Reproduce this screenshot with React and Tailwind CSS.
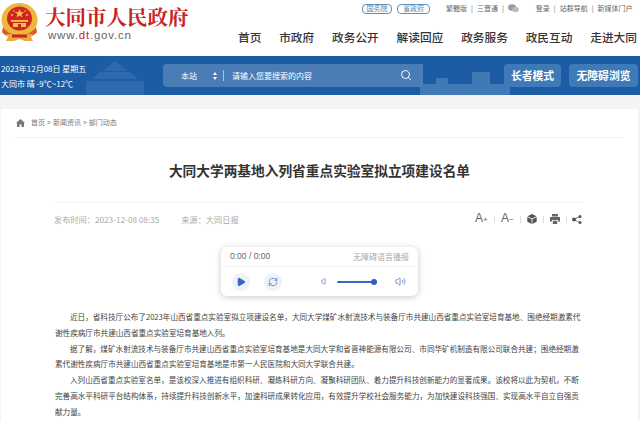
import React from "react";
import { Search, Play, RefreshCw, Volume, Volume2 } from "lucide-react";

const font = { fontFamily: '"Noto Sans CJK SC","Liberation Sans",sans-serif' };
const latin = { fontFamily: '"Liberation Sans",sans-serif' };

function Emblem() {
  return (
    <svg width="37" height="39" viewBox="0 0 37 39" className="shrink-0">
      <ellipse cx="18.500" cy="17" rx="18" ry="17" fill="#efb63c" />
      <ellipse cx="18.500" cy="15.500" rx="12.500" ry="12" fill="#cf2620" />
      <path d="M18.500 6l1.300 3.300h3.400l-2.800 2 1.100 3.300-3-2-3 2 1.100-3.300-2.800-2h3.400z" fill="#f5c842" />
      <circle cx="11" cy="12" r="1" fill="#f5c842" /><circle cx="26" cy="12" r="1" fill="#f5c842" />
      <circle cx="13" cy="8" r="0.800" fill="#f5c842" /><circle cx="24" cy="8" r="0.800" fill="#f5c842" />
      <rect x="10" y="17" width="17" height="1.800" fill="#f5c842" />
      <rect x="12" y="20" width="13" height="4" fill="#f5c842" />
      <rect x="17" y="21" width="3" height="3" fill="#cf2620" />
      <path d="M2 24c3 5 9 8 16.500 8S32 29 35 24l1 5c-3 4-9 6-17.500 6S4 33 1 29z" fill="#e2552a" />
      <path d="M5 31h27l-2 3 2 4H24l-5.500-2L13 38H5l2-4z" fill="#e9a93a" />
      <rect x="11" y="31.500" width="15" height="3" fill="#c9261f" />
    </svg>
  );
}

function Header() {
  const items = ["首页", "市政府", "政务公开", "解读回应", "政务服务", "政民互动", "走进大同"];
  return (
    <div className="flex h-[56px] bg-white">
      <div className="flex w-[232px] shrink-0 pl-[1px] pt-[3px]">
        <Emblem />
        <div className="ml-[7px] flex flex-col">
          <div className="text-[20.500px] leading-[26px] font-bold text-[#c7231f] whitespace-nowrap" style={{ fontFamily: '"Noto Serif CJK SC","Noto Sans CJK SC",serif' }}>大同市人民政府</div>
          <div className="ml-[3px] text-[11.500px] leading-[13px] tracking-[0.800px] text-[#666]" style={latin}>www.<span className="text-[#c7231f]">dt</span>.gov.cn</div>
        </div>
      </div>
      <div className="flex flex-1 flex-col">
        <div className="flex h-[17px] items-center text-[7px] text-[#666] whitespace-nowrap">
          <div className="ml-[130px] flex gap-[5px]">
            <span className="flex h-[10px] w-[30px] items-center justify-center rounded-[4px] border border-[#5b93b7] text-[#4d87ad]">国务院</span>
            <span className="flex h-[10px] w-[33px] items-center justify-center rounded-[4px] border border-[#5b93b7] text-[#4d87ad]">省政府</span>
          </div>
          <div className="ml-[16px] flex items-center gap-[4px]">
            <span>繁體版</span><span>|</span><span>三晋通</span><span>|</span>
            <svg width="11" height="9" viewBox="0 0 11 9"><ellipse cx="4" cy="3.500" rx="4" ry="3.300" fill="#999" /><ellipse cx="7.500" cy="5.500" rx="3.300" ry="2.800" fill="#bbb" /></svg>
          </div>
          <div className="ml-[17px] flex items-center gap-[4px]">
            <span>登录</span><span>|</span><span>站群导航</span><span>|</span><span>新媒体门户</span>
          </div>
        </div>
        <nav className="flex justify-between pl-[6px] pr-[3px] pt-[11px] text-[11.700px] leading-[18px] font-medium text-[#333] whitespace-nowrap">
          {items.map((t) => <span key={t}>{t}</span>)}
        </nav>
      </div>
    </div>
  );
}

function SearchBand() {
  return (
    <div className="relative flex h-[39px] items-center overflow-hidden bg-[#1b5ca4] text-white">
      <svg className="absolute left-[70px] top-[3px]" width="90" height="36" viewBox="0 0 90 36" fill="#3a76b6" opacity="0.55">
        <path d="M45 2l12 10H33zM30 13h30l8 7H22zM16 22h58v14H16z" />
      </svg>
      <svg className="absolute left-[420px] top-[10px]" width="90" height="29" viewBox="0 0 90 29" fill="#6c9ccc" opacity="0.45">
        <path d="M0 18h90v11H0zM52 6h18v12H52zM16 12h12v6H16z" />
      </svg>
      <div className="relative w-[163px] shrink-0 pl-[1px] text-[8px] leading-[15px] whitespace-nowrap">
        <div>2023年12月08日 星期五</div>
        <div>大同市 晴 -9℃~12℃</div>
      </div>
      <div className="relative flex h-[23px] w-[260px] shrink-0 items-center rounded-l-[4px] bg-[#4a7db6] pl-[18px] text-[8px] whitespace-nowrap">
        <span className="w-[32px]">本站</span>
        <svg width="4" height="8" viewBox="0 0 4 8" className="mr-[6px]" fill="#fff"><path d="M2 0l2 3H0zM2 8L0 5h4z" /></svg>
        <span className="mr-[8px] h-[11px] w-px bg-[#a9c4e0]" />
        <span>请输入您要搜索的内容</span>
        <Search className="absolute right-[11px] top-[5px] text-white" size={12} strokeWidth={2} />
      </div>
      <div className="relative ml-[81px] flex h-[23px] w-[57px] shrink-0 items-center justify-center rounded-[4px] bg-[#3f7ab8] text-[10.800px] font-bold whitespace-nowrap">长者模式</div>
      <div className="relative ml-[8px] flex h-[23px] w-[69px] shrink-0 items-center justify-center rounded-[4px] bg-[#3f7ab8] text-[10.800px] font-bold whitespace-nowrap">无障碍浏览</div>
    </div>
  );
}

function Crumb() {
  return (
    <div className="ml-[14px] mr-[14px] flex h-[29px] items-center border-b border-[#f1f1f1] pb-[1px] text-[7px] text-[#777] whitespace-nowrap">
      <svg width="9" height="8" viewBox="0 0 9 8" className="mr-[6px] ml-[1px]" fill="#777"><path d="M4.500 0L9 4H8v4H5.500V5.500h-2V8H1V4H0z" /></svg>
      <span>首页</span><span className="mx-[2px]">&gt;</span><span>新闻资讯</span><span className="mx-[2px]">&gt;</span><span>部门动态</span>
    </div>
  );
}

function Meta() {
  const Sep = ({ className }) => <span className={`block h-[7px] w-px bg-[#ddd] ${className}`} />;
  return (
    <div className="ml-[52px] mr-[56px] flex h-[33px] items-center justify-between border-t border-[#f3f3f3] text-[8.200px] text-[#aaa]">
      <div className="flex gap-[22px] pl-[1px] whitespace-nowrap"><span>发布时间：2023-12-08 08:35</span><span>来源：大同日报</span></div>
      <div className="flex items-center text-[#666]">
        <span className="w-[14px] text-[12px] leading-[12px] whitespace-nowrap" style={latin}>A<span className="text-[8px]">+</span></span>
        <Sep className="ml-[5px] mr-[6px]" />
        <span className="w-[14px] text-[12px] leading-[12px] whitespace-nowrap" style={latin}>A<span className="text-[8px]">−</span></span>
        <Sep className="ml-[5px] mr-[6px]" />
        <svg width="10" height="10" viewBox="0 0 10 10" fill="#555"><path d="M5 0l4.500 2.300L5 4.600.5 2.300zM.3 3l4.300 2.200V10L.3 7.700zM9.700 3L5.400 5.200V10l4.300-2.300z" /></svg>
        <Sep className="ml-[6px] mr-[6px]" />
        <svg width="10" height="10" viewBox="0 0 10 10" fill="#666"><path d="M2 0h6v2.500H2zM0 3h10v4.500H8V6H2v1.500H0zM2.800 6.800h4.400V10H2.800z" /></svg>
        <Sep className="ml-[6px] mr-[5px]" />
        <svg width="10" height="9" viewBox="0 0 10 9" fill="#555"><circle cx="2" cy="4.500" r="2" /><circle cx="8" cy="1.500" r="1.500" /><circle cx="8" cy="7.500" r="1.500" /><path d="M2 4l6-3 .3.800-6 3zM2 5l6 3-.3-.8-6-3z" /></svg>
      </div>
    </div>
  );
}

function Player() {
  return (
    <div className="mx-auto mt-[12px] w-[197px] rounded-[6px] bg-white shadow-[0_1px_6px_rgba(0,0,0,0.22)]">
      <div className="flex h-[20px] items-center justify-between border-b border-[#f2f2f2] px-[9px]">
        <span className="text-[8.500px] text-[#666]" style={latin}>0:00 / 0:00</span>
        <span className="text-[8px] text-[#aaa] whitespace-nowrap">无障碍语音播报</span>
      </div>
      <div className="flex h-[29px] items-center px-[11px]">
        <span className="flex size-[18px] items-center justify-center rounded-full bg-[#eef2fa]"><Play size={10} className="fill-[#3a67c0] text-[#3a67c0]" /></span>
        <span className="ml-[14px] flex size-[18px] items-center justify-center rounded-full bg-[#eef2fa]"><RefreshCw size={10} className="text-[#5a7fb8]" /></span>
        <Volume size={9} className="ml-[39px] text-[#6a88c0]" />
        <span className="relative ml-[7px] h-[2px] w-[40px] rounded bg-[#3a67c0]"><span className="absolute right-0 top-[-2px] size-[6px] rounded-full bg-[#2f5fc0]" /></span>
        <Volume2 size={11} className="ml-[18px] text-[#6a88c0]" />
      </div>
    </div>
  );
}

export default function App() {
  return (
    <div className="h-[421px] w-[640px] overflow-hidden bg-[#f4f4f4]" style={font}>
      <Header />
      <SearchBand />
      <div className="ml-[1px] mr-[2px] mt-[14px] h-[312px] bg-white">
        <Crumb />
        <h1 className="mt-[22px] text-center text-[13.700px] leading-[20px] font-bold text-[#333]">大同大学两基地入列省重点实验室拟立项建设名单</h1>
        <div className="mt-[22px]"><Meta /></div>
        <Player />
        <div className="ml-[54px] mr-[54px] mt-[13px] text-[7.600px] leading-[15.800px] text-[#444]">
          <p className="indent-[15px]">近日，省科技厅公布了2023年山西省重点实验室拟立项建设名单，大同大学煤矿水射流技术与装备厅市共建山西省重点实验室培育基地、围绝经期激素代谢性疾病厅市共建山西省重点实验室培育基地入列。</p>
          <p className="indent-[15px]">据了解，煤矿水射流技术与装备厅市共建山西省重点实验室培育基地是大同大学和省晋神能源有限公司、市同华矿机制造有限公司联合共建；围绝经期激素代谢性疾病厅市共建山西省重点实验室培育基地是市第一人民医院和大同大学联合共建。</p>
          <p className="indent-[15px]">入列山西省重点实验室名单，是该校深入推进有组织科研、凝练科研方向、凝聚科研团队、着力提升科技创新能力的显著成果。该校将以此为契机，不断完善高水平科研平台结构体系，持续提升科技创新水平，加速科研成果转化应用，有效提升学校社会服务能力，为加快建设科技强国、实现高水平自立自强贡献力量。</p>
        </div>
      </div>
    </div>
  );
}
